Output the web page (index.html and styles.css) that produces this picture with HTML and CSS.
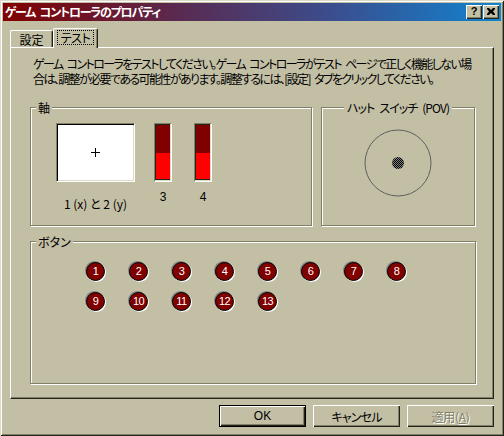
FILE: index.html
```html
<!DOCTYPE html>
<html lang="ja">
<head>
<meta charset="utf-8">
<title>ゲーム コントローラのプロパティ</title>
<link rel="stylesheet" href="styles.css">
</head>
<body>
<div class="window">
  <div class="titlebar">
    <span class="title">ゲーム コントローラのプロパティ</span>
    <div class="tbtns">
      <span class="tbtn">?</span>
      <span class="tbtn">
        <svg width="8" height="7" viewBox="0 0 8 7"><path d="M0 0h2l2 2 2-2h2v1L6 3.5 8 6v1H6L4 5 2 7H0V6l2-2.5L0 1z" fill="#000"/></svg>
      </span>
    </div>
  </div>
  <div class="content">
    <div class="tabs">
      <div class="tab">設定</div>
      <div class="tab active"><span class="focus">テスト</span></div>
    </div>
    <div class="panel">
      <p class="intro">ゲーム コントローラをテストしてください。ゲーム コントローラがテスト ページで正しく機能しない場<br>合は、調整が必要である可能性があります。調整するには、[設定] タブをクリックしてください。</p>
      <div class="grouprow">
        <div class="group axes">
          <span class="legend">軸</span>
          <div class="axcol">
            <div class="xybox"><span class="cross"></span></div>
            <span class="axlabel">1 (x) と 2 (y)</span>
          </div>
          <div class="barcol">
            <div class="bar"><div class="bar-top"></div><div class="bar-bot"></div></div>
            <span class="barlabel">3</span>
          </div>
          <div class="barcol">
            <div class="bar"><div class="bar-top"></div><div class="bar-bot"></div></div>
            <span class="barlabel">4</span>
          </div>
        </div>
        <div class="group hat">
          <span class="legend center">ハット スイッチ (POV)</span>
          <svg class="pov" width="70" height="70" viewBox="0 0 70 70">
            <defs>
              <pattern id="dith" width="2" height="2" patternUnits="userSpaceOnUse">
                <rect width="2" height="2" fill="#000"/>
                <rect width="1" height="1" fill="#808080"/>
                <rect x="1" y="1" width="1" height="1" fill="#808080"/>
              </pattern>
            </defs>
            <circle cx="35" cy="35" r="33" fill="none" stroke="#5f5f5f" stroke-width="1"/>
            <circle cx="35" cy="35" r="6" fill="url(#dith)"/>
          </svg>
        </div>
      </div>
      <div class="group buttons">
        <span class="legend">ボタン</span>
        <div class="btngrid">
          <span class="jb">1</span><span class="jb">2</span><span class="jb">3</span><span class="jb">4</span>
          <span class="jb">5</span><span class="jb">6</span><span class="jb">7</span><span class="jb">8</span>
          <span class="jb">9</span><span class="jb">10</span><span class="jb">11</span><span class="jb">12</span>
          <span class="jb">13</span>
        </div>
      </div>
    </div>
    <div class="actions">
      <button class="btn default">OK</button>
      <button class="btn">キャンセル</button>
      <button class="btn disabled">適用(<u>A</u>)</button>
    </div>
  </div>
</div>
</body>
</html>
```
FILE: styles.css
```css
* { box-sizing: border-box; }
html, body { margin: 0; padding: 0; background: #c3bfa5; }
body {
  font-family: "Noto Sans CJK JP", "Noto Sans", sans-serif;
  font-size: 12px;
  font-feature-settings: "palt";
  color: #000;
}
.window {
  width: 504px;
  height: 436px;
  background: #c3bfa5;
  padding: 3px;
  box-shadow: inset 1px 1px 0 #dcdac8, inset -1px -1px 0 #24231a, inset 2px 2px 0 #ffffff, inset -2px -2px 0 #838068;
  display: flex;
  flex-direction: column;
}
.titlebar {
  height: 18px;
  flex: none;
  background: linear-gradient(to right, #800000 0%, #5a2a50 35%, #3c4c8c 65%, #1084d0 100%);
  display: flex;
  align-items: center;
  justify-content: space-between;
  padding: 0 2px 0 2px;
}
.title {
  color: #fff;
  font-weight: bold;
  font-size: 12px;
  line-height: 18px;
  letter-spacing: -1.2px;
  word-spacing: 3px;
  white-space: nowrap;
}
.tbtns { display: flex; }
.tbtn {
  width: 16px;
  height: 14px;
  background: #c3bfa5;
  box-shadow: inset 1px 1px 0 #fff, inset -1px -1px 0 #24231a, inset -2px -2px 0 #838068;
  display: flex;
  align-items: center;
  justify-content: center;
  font-family: "Liberation Sans", sans-serif;
  font-weight: bold;
  font-size: 11px;
  line-height: 1;
  padding-bottom: 1px;
}
.tbtn + .tbtn { margin-left: 1px; }
.content {
  flex: 1;
  padding: 7px 7px 0 7px;
  display: flex;
  flex-direction: column;
}
.tabs {
  display: flex;
  align-items: flex-end;
  height: 19px;
  flex: none;
}
.tab {
  width: 43px;
  height: 17px;
  text-align: center;
  line-height: 16px;
  border-top: 1px solid #fff;
  border-left: 1px solid #fff;
  border-right: 1px solid #24231a;
  border-radius: 2px 2px 0 0;
  box-shadow: inset -1px 0 0 #838068;
  padding-top: 1px;
}
.tab.active {
  width: 45px;
  height: 20px;
  margin-bottom: -1px;
  background: #c3bfa5;
  position: relative;
  z-index: 1;
  padding-top: 1px;
  letter-spacing: -0.5px;
}
.focus {
  display: inline-block;
  border: 1px dotted #000;
  padding: 0 3px;
  line-height: 13px;
}
.panel {
  height: 352px;
  flex: none;
  border-top: 1px solid #fff;
  border-left: 1px solid #fff;
  border-right: 1px solid #24231a;
  border-bottom: 1px solid #24231a;
  box-shadow: inset -1px -1px 0 #838068;
  padding: 8px 16px 0 19px;
  display: flex;
  flex-direction: column;
}
.intro {
  margin: 0 0 0 3px;
  line-height: 15px;
  letter-spacing: -1.6px;
  word-spacing: 3px;
  white-space: nowrap;
}
.grouprow {
  display: flex;
  gap: 9px;
  margin-top: 21px;
}
.group {
  position: relative;
  border: 1px solid #838068;
  box-shadow: inset 1px 1px 0 #fff, 1px 1px 0 #fff;
}
.legend {
  position: absolute;
  top: -8px;
  left: 5px;
  padding: 0 2px;
  background: #c3bfa5;
  line-height: 15px;
  white-space: nowrap;
}
.legend.center {
  left: 0;
  right: 0;
  margin: 0 auto;
  width: max-content;
  letter-spacing: -0.9px;
  word-spacing: 3px;
  padding: 0 3px;
}
.axes {
  width: 282px;
  height: 119px;
  display: flex;
  align-items: flex-start;
  padding: 15px 0 0 25px;
}
.axcol {
  width: 79px;
  display: flex;
  flex-direction: column;
  align-items: center;
}
.xybox {
  width: 79px;
  height: 59px;
  background: #fff;
  border-top: 1px solid #838068;
  border-left: 1px solid #838068;
  border-right: 1px solid #fff;
  border-bottom: 1px solid #fff;
  box-shadow: inset 1px 1px 0 #000, inset -1px -1px 0 #dcdac8;
  display: flex;
  align-items: center;
  justify-content: center;
}
.cross {
  width: 9px;
  height: 9px;
  background: linear-gradient(#000, #000) center / 9px 1px no-repeat, linear-gradient(#000, #000) center / 1px 9px no-repeat;
}
.axlabel {
  margin-top: 15px;
  line-height: 14px;
  white-space: nowrap;
}
.barcol {
  width: 18px;
  display: flex;
  flex-direction: column;
  align-items: center;
  margin-left: 19px;
}
.barcol + .barcol { margin-left: 22px; }
.bar {
  width: 18px;
  height: 59px;
  border-top: 1px solid #838068;
  border-left: 1px solid #838068;
  border-right: 1px solid #fff;
  border-bottom: 1px solid #fff;
  padding: 1px 1px 1px 1px;
  display: flex;
  flex-direction: column;
  background: #24231a;
  box-shadow: inset -1px -1px 0 #dcdac8;
}
.bar-top { height: 28px; background: #800000; }
.bar-bot { flex: 1; background: #ff0000; margin-bottom: 1px; }
.barlabel {
  margin-top: 8px;
  line-height: 14px;
  font-family: "Liberation Sans", sans-serif;
}
.hat {
  width: 154px;
  height: 119px;
  display: flex;
  justify-content: center;
  align-items: flex-start;
  padding-top: 20px;
}
.pov { display: block; }
.buttons {
  width: 446px;
  height: 143px;
  margin-top: 15px;
  padding: 20px 0 0 55px;
}
.btngrid {
  display: grid;
  grid-template-columns: repeat(8, 43px);
  row-gap: 11px;
}
.jb {
  width: 19px;
  height: 19px;
  border-radius: 50%;
  background: #800000;
  border: 1px solid #000;
  box-shadow: -1px -1px 0 #808080, 1px 1px 0 #fff;
  color: #fff;
  font-family: "Liberation Sans", sans-serif;
  font-size: 11px;
  line-height: 17px;
  text-align: center;
  letter-spacing: -0.5px;
}
.actions {
  display: flex;
  justify-content: flex-end;
  gap: 7px;
  margin-top: 6px;
}
.btn {
  width: 87px;
  height: 22px;
  padding: 0;
  background: #c3bfa5;
  border: none;
  font-family: "Noto Sans CJK JP", sans-serif;
  font-size: 12px;
  font-feature-settings: "palt";
  letter-spacing: -0.8px;
  color: #000;
  box-shadow: inset 1px 1px 0 #fff, inset -1px -1px 0 #24231a, inset -2px -2px 0 #838068;
}
.btn.default {
  box-shadow: inset 0 0 0 1px #000, inset 2px 2px 0 #fff, inset -2px -2px 0 #24231a, inset -3px -3px 0 #838068;
  font-family: "Liberation Sans", sans-serif;
  letter-spacing: 0;
}
.btn.disabled {
  color: #838068;
  text-shadow: 1px 1px 0 #fff;
  letter-spacing: -0.3px;
}
.btn.disabled u { text-decoration-color: #838068; }
```
